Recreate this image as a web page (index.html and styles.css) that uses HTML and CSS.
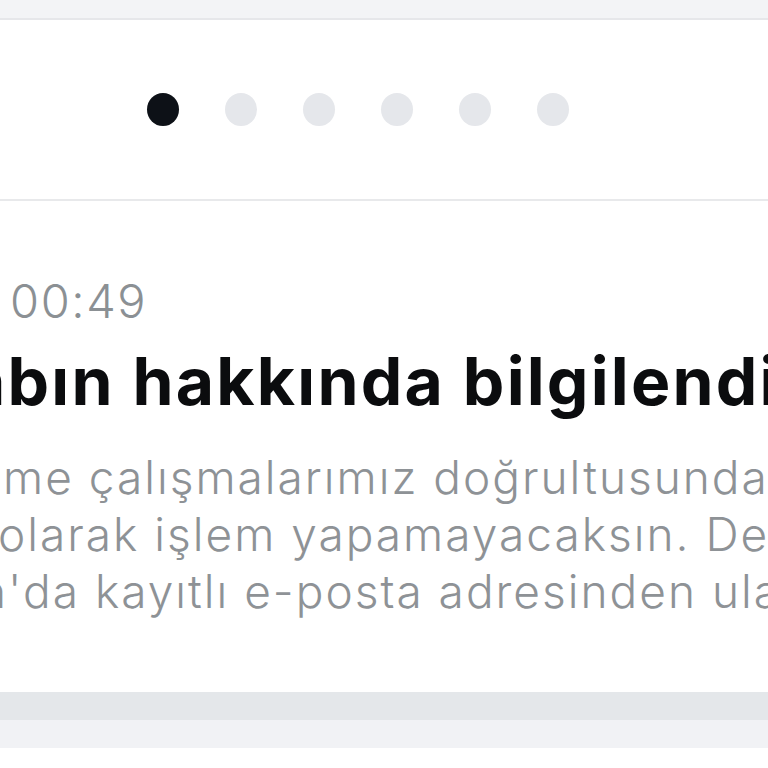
FILE: index.html
```html
<!DOCTYPE html>
<html lang="tr">
<head>
    <meta charset="UTF-8">
    <meta name="viewport" content="width=device-width, initial-scale=1.0">
    <title>Bildirim</title>
    <link rel="stylesheet" href="styles.css">
</head>
<body>
    <div class="topbar"></div>
    <div class="pager">
        <span class="dot active"></span>
        <span class="dot"></span>
        <span class="dot"></span>
        <span class="dot"></span>
        <span class="dot"></span>
        <span class="dot"></span>
    </div>
    <div class="message">
        <p class="time">00:49</p>
        <h1 class="title">abın hakkında bilgilendirme</h1>
        <div class="body">
            <p class="line line-1">me çalışmalarımız doğrultusunda hesabın</p>
            <p class="line line-2">olarak işlem yapamayacaksın. Detaylı bilgi için</p>
            <p class="line line-3">n'da kayıtlı e-posta adresinden ulaşabilirsin.</p>
        </div>
    </div>
    <div class="footer">
        <div class="footer-band"></div>
        <div class="footer-band light"></div>
    </div>
</body>
</html>
```

FILE: styles.css
```css
body {
    margin: 0;
    background: #fff;
    font-family: Inter, "Noto Sans", sans-serif;
    overflow: hidden;
}
.topbar {
    height: 18px;
    background-color: #f3f4f6;
    border-bottom: 2px solid #e6e7ea;
}
.pager {
    height: 179px;
    display: flex;
    align-items: center;
    gap: 46px;
    padding-left: 147px;
    border-bottom: 2px solid #e8e9eb;
}
.dot {
    width: 32px;
    height: 33px;
    border-radius: 50%;
    background-color: #e5e7eb;
}
.dot.active {
    background-color: #0d1117;
}
.message {
    height: 491px;
    overflow: hidden;
    white-space: nowrap;
}
.time {
    margin: 75px 0 0 0;
    padding-left: 10px;
    font-size: 47px;
    font-weight: 300;
    line-height: 50px;
    letter-spacing: 1.6px;
    color: #8b9094;
}
.title {
    margin: 17px 0 0 0;
    font-size: 66px;
    line-height: 76px;
    font-weight: 700;
    color: #0b0c0e;
    text-indent: -33px;
    letter-spacing: 2.2px;
}
.body {
    margin-top: 30px;
    color: #8e9296;
    font-size: 46px;
    font-weight: 300;
    line-height: 57px;
    letter-spacing: 2px;
}
.line {
    margin: 0;
}
.line-1 {
    text-indent: 3px;
}
.line-2 {
    text-indent: -2px;
}
.line-3 {
    text-indent: -21px;
}
.footer-band {
    height: 28px;
    background-color: #e4e7ea;
}
.footer-band.light {
    background-color: #f1f2f5;
}
```
